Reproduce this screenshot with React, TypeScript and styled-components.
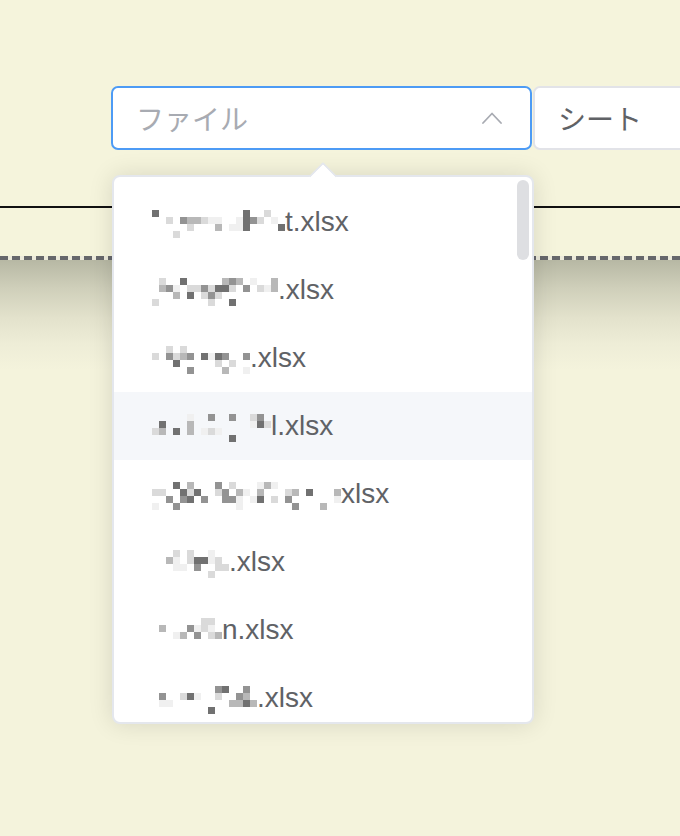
import React from "react";
import styled, { createGlobalStyle } from "styled-components";

const Global = createGlobalStyle`
  html, body { margin: 0; padding: 0; }
  body { background: #f5f4dc; }
`;

const Page = styled.div`
  position: relative;
  width: 680px;
  height: 836px;
  overflow: hidden;
  background: #f5f4dc;
  font-family: "Liberation Sans", "Noto Sans CJK JP", sans-serif;
`;

const Toolbar = styled.div`
  display: flex;
  gap: 1px;
  padding: 86px 0 0 111px;
`;

const Select = styled.div<{ $focused?: boolean; $width: number }>`
  box-sizing: border-box;
  flex: none;
  width: ${(p) => p.$width}px;
  height: 64px;
  display: flex;
  align-items: center;
  justify-content: space-between;
  padding: 0 28px 0 23px;
  background: #ffffff;
  border: 2px solid ${(p) => (p.$focused ? "#4d9bf5" : "#e2e3e8")};
  border-radius: 7px;
  font-size: 28px;
`;

const SelectText = styled.span<{ $placeholder?: boolean }>`
  color: ${(p) => (p.$placeholder ? "#a8abb2" : "#606266")};
  white-space: nowrap;
`;

const Rule = styled.div`
  margin-top: 56px;
  height: 2px;
  background: #111111;
`;

const Dashed = styled.div`
  margin-top: 48px;
  height: 4px;
  background: repeating-linear-gradient(
    to right,
    #66676b 0,
    #66676b 8px,
    #eceadb 8px,
    #eceadb 12px
  );
`;

const Shade = styled.div`
  height: 580px;
  background: linear-gradient(
    to bottom,
    #b7b8a4 0,
    #cfcfba 28px,
    #e3e2cc 58px,
    #eeedd7 84px,
    #f4f3dc 110px
  );
`;

const Dropdown = styled.div`
  position: absolute;
  top: 175px;
  left: 112px;
  width: 422px;
  height: 549px;
  box-sizing: border-box;
  background: #ffffff;
  border: 2px solid #e4e7ed;
  border-radius: 8px;
  box-shadow: 0 0 24px rgba(0, 0, 0, 0.12);
`;

const Arrow = styled.div`
  position: absolute;
  top: -11px;
  left: 199px;
  width: 18px;
  height: 18px;
  background: #ffffff;
  border-top: 2px solid #e4e7ed;
  border-left: 2px solid #e4e7ed;
  border-top-left-radius: 2px;
  transform: rotate(45deg);
`;

const List = styled.div`
  height: 100%;
  overflow: hidden;
  padding-top: 11px;
  box-sizing: border-box;
  border-radius: 6px;
`;

const Item = styled.div<{ $hover?: boolean }>`
  height: 68px;
  display: flex;
  align-items: center;
  padding-left: 38px;
  background: ${(p) => (p.$hover ? "#f5f7fa" : "transparent")};
  color: #606266;
  font-size: 28px;
  white-space: nowrap;
`;

const Suffix = styled.span`
  line-height: 1;
`;

const MosaicGrid = styled.span<{ $cols: number }>`
  display: inline-grid;
  grid-template-columns: repeat(${(p) => p.$cols}, 7px);
  grid-auto-rows: 7px;
  margin-top: 4px;
`;

const Cell = styled.span<{ $c: string }>`
  background: ${(p) => p.$c};
`;

const Scrollbar = styled.div`
  position: absolute;
  top: 3px;
  right: 3px;
  width: 12px;
  height: 80px;
  border-radius: 6px;
  background: #dedfe2;
`;

const shades = ["#f0f0f0", "#dadada", "#b8b8b8", "#939393", "#717171"];

function makeCells(seed: number, cols: number, lead: number): string[] {
  let s = seed * 9301 + 49297;
  const rnd = () => {
    s = (s * 9301 + 49297) % 233280;
    return s / 233280;
  };
  const prob = [0.25, 0.6, 0.45, 0.1];
  const out: string[] = [];
  for (let r = 0; r < 4; r++) {
    for (let c = 0; c < cols; c++) {
      if (c < lead || rnd() > prob[r]) {
        out.push("transparent");
      } else {
        out.push(shades[Math.floor(rnd() * shades.length)]);
      }
    }
  }
  return out;
}

function Mosaic({ seed, width, lead = 0 }: { seed: number; width: number; lead?: number }) {
  const cols = Math.round(width / 7);
  const cells = makeCells(seed, cols, lead);
  return (
    <MosaicGrid $cols={cols}>
      {cells.map((c, i) => (
        <Cell key={i} $c={c} />
      ))}
    </MosaicGrid>
  );
}

const items = [
  { seed: 3, width: 133, suffix: "t.xlsx" },
  { seed: 7, width: 126, suffix: " .xlsx" },
  { seed: 11, width: 98, suffix: ".xlsx" },
  { seed: 5, width: 119, suffix: "l.xlsx" },
  { seed: 13, width: 189, suffix: " xlsx" },
  { seed: 17, width: 77, suffix: ".xlsx", lead: 2 },
  { seed: 19, width: 70, suffix: "n.xlsx", lead: 1 },
  { seed: 23, width: 105, suffix: ".xlsx", lead: 1 },
];

function Chevron() {
  return (
    <svg width="20" height="12" viewBox="0 0 20 12" fill="none">
      <polyline
        points="1,11 10,1.5 19,11"
        stroke="#a8abb2"
        strokeWidth="1.8"
        strokeLinecap="round"
        strokeLinejoin="round"
      />
    </svg>
  );
}

export default function App() {
  return (
    <Page>
      <Global />
      <Toolbar>
        <Select $focused $width={421}>
          <SelectText $placeholder>ファイル</SelectText>
          <Chevron />
        </Select>
        <Select $width={220}>
          <SelectText>シート</SelectText>
        </Select>
      </Toolbar>
      <Rule />
      <Dashed />
      <Shade />
      <Dropdown>
        <Arrow />
        <List>
          {items.map((it, i) => (
            <Item key={i} $hover={i === 3}>
              <Mosaic seed={it.seed} width={it.width} lead={it.lead} />
              <Suffix>{it.suffix}</Suffix>
            </Item>
          ))}
        </List>
        <Scrollbar />
      </Dropdown>
    </Page>
  );
}
